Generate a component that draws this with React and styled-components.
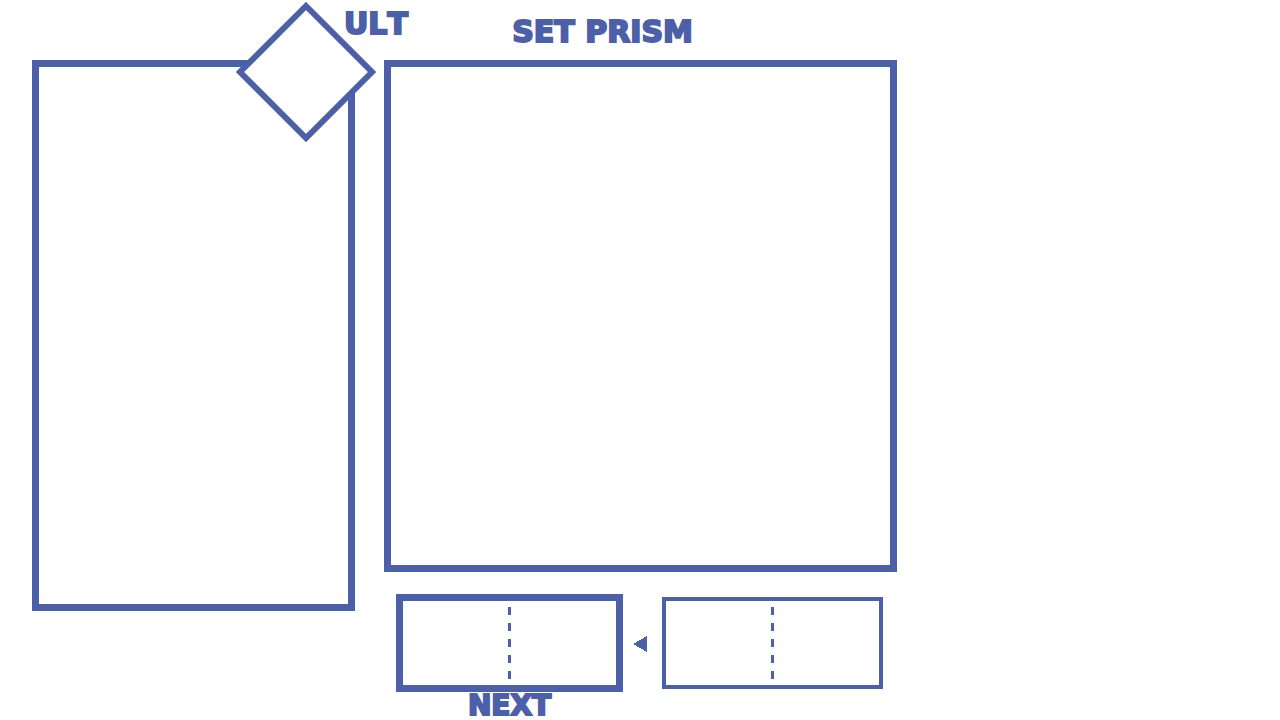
import React from "react";
import styled, { createGlobalStyle } from "styled-components";

const ink = "#4c60aa";

const GlobalStyle = createGlobalStyle`
  * { box-sizing: border-box; }
  body {
    margin: 0;
    background: #ffffff;
    color: ${ink};
    font-family: "DejaVu Sans", sans-serif;
  }
`;

const Page = styled.main`
  display: grid;
  grid-template-columns: minmax(0, 323fr) minmax(0, 513fr) minmax(0, 354fr);
  column-gap: 29px;
  align-items: start;
  padding-left: 32px;
`;

const Label = styled.h2`
  margin: 0;
  font-size: ${({ $small }) => ($small ? 28 : 30)}px;
  line-height: ${({ $small }) => ($small ? 28 : 48)}px;
  font-weight: 700;
  font-kerning: none;
  text-align: ${({ $small }) => ($small ? "center" : "left")};
  white-space: nowrap;
  -webkit-text-stroke: 2px ${ink};
`;

const Frame = styled.div`
  border: ${({ $thin }) => ($thin ? 4 : 7)}px solid ${ink};
`;

const Side = styled.section`
  position: relative;
  margin-top: 60px;
`;

const SideFrame = styled(Frame)`
  min-height: 551px;
`;

const Ult = styled.div`
  position: absolute;
  top: -60px;
  left: 100%;
  margin-left: -119px;
  display: flex;
  align-items: flex-start;
`;

const Diamond = styled.svg`
  display: block;
  flex: none;
  width: 140px;
  height: 140px;
  margin-top: 2px;
  margin-right: -32px;
`;

const Board = styled.section`
  display: flex;
  flex-direction: column;
`;

const BoardHeader = styled.header`
  padding: 8px 0 4px 25%;
`;

const BoardFrame = styled(Frame)`
  min-height: 512px;
`;

const Queue = styled.div`
  display: grid;
  grid-template-columns: minmax(0, 227fr) auto minmax(0, 221fr);
  align-items: center;
  padding: 22px 14px 0 12px;
`;

const Slot = styled(Frame)`
  display: flex;
  justify-content: center;
  padding: 6px 0 5px;
`;

const Divider = styled.div`
  width: 3px;
  height: 73px;
  background: repeating-linear-gradient(${ink} 0 8px, transparent 8px 16px);
`;

const Arrow = styled.svg`
  width: 14px;
  height: 16px;
  margin: 2px 15px 0 10px;
`;

export default function App() {
  return (
    <>
      <GlobalStyle />
      <Page>
        <Side>
          <SideFrame />
          <Ult>
            <Diamond viewBox="0 0 140 140" aria-hidden="true">
              <polygon
                points="70,4 136,70 70,136 4,70"
                fill="#ffffff"
                stroke={ink}
                strokeWidth="6"
              />
            </Diamond>
            <Label>ULT</Label>
          </Ult>
        </Side>
        <Board>
          <BoardHeader>
            <Label as="h1">SET PRISM</Label>
          </BoardHeader>
          <BoardFrame />
          <Queue>
            <Slot>
              <Divider />
            </Slot>
            <Arrow viewBox="0 0 14 16" shapeRendering="crispEdges" aria-hidden="true">
              <polygon points="0,8 14,0 14,16" fill={ink} />
            </Arrow>
            <Slot $thin>
              <Divider />
            </Slot>
            <Label $small>NEXT</Label>
          </Queue>
        </Board>
      </Page>
    </>
  );
}
